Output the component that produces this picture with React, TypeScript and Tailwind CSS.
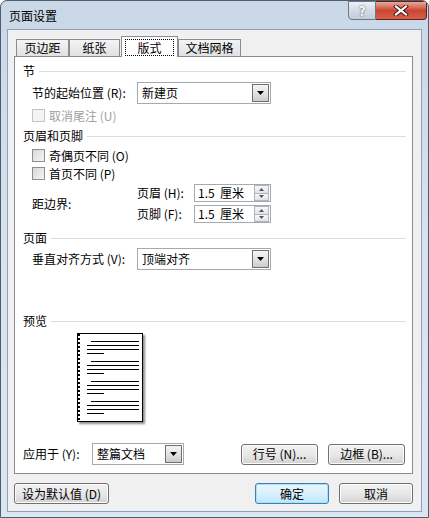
import React from "react";

const Tri = () => (
  <svg width="7" height="4" viewBox="0 0 7 4">
    <path d="M0 0h7L3.5 4z" fill="#000" />
  </svg>
);

function Combo({ value, w }: { value: string; w: string }) {
  return (
    <div className={`flex h-[22px] items-center border border-[#a5a9b0] bg-white ${w}`}>
      <span className="flex-1 pl-[4px]">{value}</span>
      <span className="mr-[1px] flex h-[18px] w-[17px] items-center justify-center border border-[#707070] bg-gradient-to-b from-[#f4f4f4] via-[#e4e4e4] to-[#cbcbcb]">
        <Tri />
      </span>
    </div>
  );
}

function Spin({ value }: { value: string }) {
  return (
    <div className="flex h-[18px] w-[77px] items-center border border-[#a5a9b0] bg-white">
      <span className="flex-1 whitespace-pre pl-[3px]">{value}</span>
      <span className="mr-[1px] flex h-[16px] w-[15px] flex-col">
        <span className="flex flex-1 items-center justify-center border border-[#b0b5bd] bg-gradient-to-b from-[#f8f8f8] to-[#dfe2e6]">
          <svg width="5" height="3" viewBox="0 0 5 3">
            <path d="M0 3h5L2.5 0z" fill="#4a5568" />
          </svg>
        </span>
        <span className="flex flex-1 items-center justify-center border border-t-0 border-[#b0b5bd] bg-gradient-to-b from-[#f8f8f8] to-[#dfe2e6]">
          <svg width="5" height="3" viewBox="0 0 5 3">
            <path d="M0 0h5L2.5 3z" fill="#4a5568" />
          </svg>
        </span>
      </span>
    </div>
  );
}

function Check({ label, disabled }: { label: string; disabled?: boolean }) {
  return (
    <div className="flex h-[13px] items-center pl-[17px]">
      <span
        className={`h-[13px] w-[13px] border ${
          disabled
            ? "border-[#c4c4c4] bg-[#f4f4f4]"
            : "border-[#8e8f8f] bg-gradient-to-br from-[#d8d8d8] to-[#f6f6f6]"
        }`}
      />
      <span className={`ml-[4px] ${disabled ? "text-[#a0a0a0]" : ""}`}>{label}</span>
    </div>
  );
}

function Header({ text, mt }: { text: string; mt: string }) {
  return (
    <div className={`flex h-[14px] items-center pl-[8px] pr-[6px] ${mt}`}>
      <span>{text}</span>
      <div className="ml-[4px] h-px flex-1 bg-[#d5dfe5]" />
    </div>
  );
}

function Btn({ text, w, primary }: { text: string; w: string; primary?: boolean }) {
  return (
    <div
      className={`flex h-[21px] items-center justify-center rounded-[3px] border bg-gradient-to-b ${w} ${
        primary
          ? "border-[#3c7fb1] from-[#eaf6fd] via-[#d9f0fc] to-[#bee6fd] shadow-[inset_0_0_0_1px_#a8e0f8]"
          : "border-[#707070] from-[#f2f2f2] via-[#e8e8e8] to-[#d2d2d2] shadow-[inset_0_0_0_1px_#fcfcfc]"
      }`}
    >
      {text}
    </div>
  );
}

const lineGroup = (
  <div className="flex flex-col gap-[3px]">
    <div className="ml-[11px] h-px w-[48px] bg-black" />
    <div className="ml-[7px] h-px w-[52px] bg-black" />
    <div className="ml-[7px] h-px w-[52px] bg-black" />
    <div className="ml-[7px] h-px w-[17px] bg-black" />
  </div>
);

export default function App() {
  return (
    <div className="flex h-[518px] w-[429px] flex-col overflow-hidden rounded-t-[7px] border border-[#4f5d6e] bg-gradient-to-b from-[#cad7e6] via-[#d8e3ef] to-[#dbe6f2] text-[12px] leading-[14px] text-black font-['Noto_Sans_CJK_SC','Noto_Sans',sans-serif]">
      {/* title bar */}
      <div className="flex h-[28px] shrink-0 items-start">
        <span className="mt-[8px] pl-[8px] text-[12px]">页面设置</span>
        <div className="ml-auto mr-[1px] flex">
          <div className="flex h-[19px] w-[28px] items-center justify-center rounded-bl-[4px] border border-[#6b7786] bg-gradient-to-b from-[#eef2f7] via-[#d3dbe5] to-[#c3cedb] text-[13px] font-bold text-white [text-shadow:0_0_2px_#333]">
            ?
          </div>
          <div className="flex h-[19px] w-[51px] items-center justify-center rounded-br-[4px] border border-l-0 border-[#5b2219] bg-gradient-to-b from-[#e9a898] via-[#c94532] to-[#d8604a]">
            <svg width="16" height="11" viewBox="0 0 16 11">
              <path d="M3 1.5l10 8M13 1.5l-10 8" stroke="#3a1510" strokeWidth="4" strokeLinecap="square" />
              <path d="M3 1.5l10 8M13 1.5l-10 8" stroke="#fff" strokeWidth="2.2" strokeLinecap="square" />
            </svg>
          </div>
        </div>
      </div>

      {/* client area */}
      <div className="mx-[6px] mb-[5px] flex flex-1 flex-col border border-[#8da2ba] bg-[#f0f0f0] pl-[6px] pr-[8px] pt-[6px]">
        {/* tabs */}
        <div className="relative z-10 flex h-[20px] items-end pl-[2px]">
          <div className="flex h-[17px] w-[53px] items-center justify-center border border-b-0 border-[#898c95] bg-gradient-to-b from-[#f4f4f4] to-[#e1e1e1]">
            页边距
          </div>
          <div className="flex h-[17px] w-[51px] items-center justify-center border border-b-0 border-[#898c95] bg-gradient-to-b from-[#f4f4f4] to-[#e1e1e1]">
            纸张
          </div>
          <div className="-mb-px ml-[1px] flex h-[21px] w-[57px] flex-col border border-b-0 border-[#898c95] bg-white px-[3px] pb-[1px] pt-[2px]">
            <div className="flex flex-1 items-center justify-center border border-dotted border-black">版式</div>
          </div>
          <div className="flex h-[17px] w-[63px] items-center justify-center border border-b-0 border-[#898c95] bg-gradient-to-b from-[#f4f4f4] to-[#e1e1e1]">
            文档网格
          </div>
        </div>

        {/* panel */}
        <div className="flex h-[418px] flex-col border border-[#898c95] bg-white">
          <Header text="节" mt="mt-[7px]" />
          <div className="mt-[4px] flex h-[22px] items-center pl-[17px]">
            <span className="w-[105px]">节的起始位置 (R):</span>
            <Combo value="新建页" w="w-[134px]" />
          </div>
          <div className="mt-[5px]">
            <Check label="取消尾注 (U)" disabled />
          </div>

          <Header text="页眉和页脚" mt="mt-[7px]" />
          <div className="mt-[6px]">
            <Check label="奇偶页不同 (O)" />
          </div>
          <div className="mt-[5px]">
            <Check label="首页不同 (P)" />
          </div>
          <div className="mt-[4px] flex pl-[17px]">
            <span className="w-[105px] self-center pt-[1px]">距边界:</span>
            <div className="flex flex-col gap-[3px]">
              <div className="flex h-[18px] items-center">
                <span className="w-[57px]">页眉 (H):</span>
                <Spin value="1.5  厘米" />
              </div>
              <div className="flex h-[18px] items-center">
                <span className="w-[57px]">页脚 (F):</span>
                <Spin value="1.5  厘米" />
              </div>
            </div>
          </div>

          <Header text="页面" mt="mt-[8px]" />
          <div className="mt-[3px] flex h-[22px] items-center pl-[17px]">
            <span className="w-[105px]">垂直对齐方式 (V):</span>
            <Combo value="顶端对齐" w="w-[134px]" />
          </div>

          <Header text="预览" mt="mt-[44px]" />
          <div className="ml-[62px] mt-[5px] flex h-[89px] w-[66px] border border-black bg-white shadow-[2px_2px_2px_rgba(0,0,0,0.45)]">
            <div className="w-[2px] bg-[repeating-linear-gradient(to_bottom,#000_0_2px,#fff_2px_4px)]" />
            <div className="flex flex-col gap-[7px] pt-[7px]">
              {lineGroup}
              {lineGroup}
              {lineGroup}
              {lineGroup}
            </div>
          </div>

          <div className="mt-[21px] flex h-[22px] items-center pl-[8px] pr-[7px]">
            <span className="w-[69px]">应用于 (Y):</span>
            <Combo value="整篇文档" w="w-[92px]" />
            <div className="ml-auto flex gap-[10px]">
              <Btn text="行号 (N)..." w="w-[77px]" />
              <Btn text="边框 (B)..." w="w-[77px]" />
            </div>
          </div>
        </div>

        {/* bottom buttons */}
        <div className="mt-[9px] flex">
          <Btn text="设为默认值 (D)" w="w-[95px]" />
          <div className="ml-auto flex gap-[10px]">
            <Btn text="确定" w="w-[74px]" primary />
            <Btn text="取消" w="w-[74px]" />
          </div>
        </div>
      </div>
    </div>
  );
}
